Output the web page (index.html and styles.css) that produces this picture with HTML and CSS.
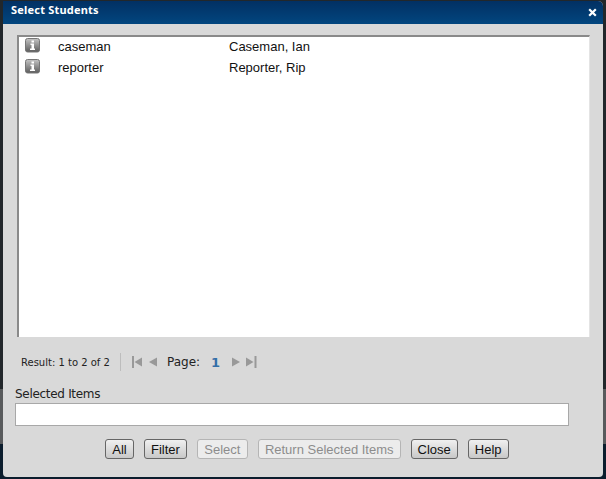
FILE: index.html
```html
<!DOCTYPE html>
<html lang="en">
<head>
<meta charset="utf-8">
<title>Select Students</title>
<link rel="stylesheet" href="styles.css">
</head>
<body>
<div class="dialog">
  <header class="titlebar">
    <span class="title">Select Students</span>
    <svg class="close-x" width="9" height="9" viewBox="0 0 9 9"><path d="M1.2 1.2 7.8 7.8M7.8 1.2 1.2 7.8" stroke="#fff" stroke-width="2.2" fill="none"/></svg>
  </header>
  <main class="content">
    <section class="list">
      <div class="row">
        <span class="info"><svg width="16" height="16" viewBox="0 0 16 16"><defs><linearGradient id="ig" x1="0" y1="0" x2="0" y2="1"><stop offset="0" stop-color="#c4c4c4"/><stop offset="1" stop-color="#5c5c5c"/></linearGradient></defs><rect x=".5" y=".5" width="14" height="13.500" rx="2" fill="url(#ig)" stroke="#777"/><path d="M6.500 2.500h2.500v2H6.500zM5.500 5.500H9V10.500h1V12H5V10.500H6.500V7H5.500z" fill="#fff"/></svg></span>
        <span class="user">caseman</span><span class="name">Caseman, Ian</span>
      </div>
      <div class="row">
        <span class="info"><svg width="16" height="16" viewBox="0 0 16 16"><rect x=".5" y=".5" width="14" height="13.500" rx="2" fill="url(#ig)" stroke="#777"/><path d="M6.500 2.500h2.500v2H6.500zM5.500 5.500H9V10.500h1V12H5V10.500H6.500V7H5.500z" fill="#fff"/></svg></span>
        <span class="user">reporter</span><span class="name">Reporter, Rip</span>
      </div>
    </section>
    <nav class="pager">
      <span class="result">Result: 1 to 2 of 2</span>
      <span class="divider"></span>
      <svg class="nav-first" width="11" height="12" viewBox="0 0 11 12"><path d="M0 0h2v12H0z" fill="#999"/><path d="M10 1.500v9L2.500 6z" fill="#999"/></svg>
      <svg class="nav-prev" width="9" height="10" viewBox="0 0 9 10"><path d="M9 .5v9L1 5z" fill="#999"/></svg>
      <span class="page-label">Page:</span>
      <span class="page-num">1</span>
      <svg class="nav-next" width="9" height="10" viewBox="0 0 9 10"><path d="M0 .5v9L8 5z" fill="#999"/></svg>
      <svg class="nav-last" width="11" height="12" viewBox="0 0 11 12"><path d="M0 1.500v9L7.500 6z" fill="#999"/><path d="M8.500 0h2v12h-2z" fill="#999"/></svg>
    </nav>
    <label class="sel-label" for="sel">Selected Items</label>
    <input class="sel-input" id="sel" type="text">
    <div class="buttons">
      <button class="btn narrow">All</button>
      <button class="btn">Filter</button>
      <button class="btn off wide">Select</button>
      <button class="btn off">Return Selected Items</button>
      <button class="btn">Close</button>
      <button class="btn">Help</button>
    </div>
  </main>
</div>
</body>
</html>
```
FILE: styles.css
```css
html, body { margin: 0; height: 100%; }
body {
  overflow: hidden; font-family: "Liberation Sans", Arial, sans-serif;
  background: linear-gradient(#22272b 0 389px, #585a5c 389px 444px, #0b1d2d 444px);
}
.dialog {
  width: 600px; height: 476px; margin: 1px 0 0 3px;
  background: #d9d9d9; border-radius: 0 5px 4px 4px; overflow: hidden;
  display: flex; flex-direction: column;
}
.titlebar {
  height: 23px; flex: none; display: flex; align-items: center; justify-content: space-between;
  padding: 0 6px 6px 8px; box-sizing: border-box;
  background: linear-gradient(#023063, #02467f);
}
.title { color: #fff; font: bold 11px "Noto Sans", sans-serif; letter-spacing: .2px; }
.close-x { margin-top: 5px; }
.content { flex: 1; display: flex; flex-direction: column; padding: 11px 0 0 12px; }
.list {
  width: 573px; height: 302px; box-sizing: border-box; margin-left: 2px; padding: 1px 0 0 6px;
  background: #fff; border-top: 2px solid #8a8a8a; border-left: 2px solid #8a8a8a; border-right: 1px solid #e4e4e4;
  display: flex; flex-direction: column; gap: 5px;
}
.row { display: flex; align-items: center; height: 16px; font-size: 13px; color: #111; }
.info { width: 33px; height: 16px; flex: none; }
.user { width: 171px; flex: none; }
.pager {
  display: flex; align-items: center; height: 20px; margin: 15px 0 0 6px;
  font: 12px "DejaVu Sans", sans-serif; color: #222;
}
.result { width: 99px; font-size: 10px; }
.divider { width: 1px; height: 18px; background: #bdbdbd; margin-right: 11px; }
.nav-prev { margin-left: 5px; }
.page-label { margin-left: 10px; }
.page-num { margin-left: 11px; font-weight: bold; font-size: 13px; color: #336fa8; }
.nav-next { margin-left: 12px; }
.nav-last { margin-left: 5px; }
.sel-label { margin-top: 15px; font: 12px "DejaVu Sans", sans-serif; letter-spacing: -.3px; color: #222; height: 15px; }
.sel-input {
  width: 554px; height: 23px; box-sizing: border-box; margin: 1px 0 0 0;
  border: 1px solid #a8a8a8; background: #fff; padding: 0; display: block;
}
.buttons { display: flex; gap: 10px; margin: 13px 0 0 90px; }
.btn {
  height: 20px; padding: 0 6px; box-sizing: border-box; font: 13px "Liberation Sans", sans-serif; color: #111;
  border: 1px solid #666; border-radius: 3px; background: linear-gradient(#f0f0f0, #dcdcdc 50%, #c8c8c8);
}
.btn.narrow { padding: 0 4px; width: 29px; }
.btn.wide { width: 51px; padding: 0; }
.btn.off { color: #8c8c8c; border-color: #b5b5b5; background: #ececec; }
```
